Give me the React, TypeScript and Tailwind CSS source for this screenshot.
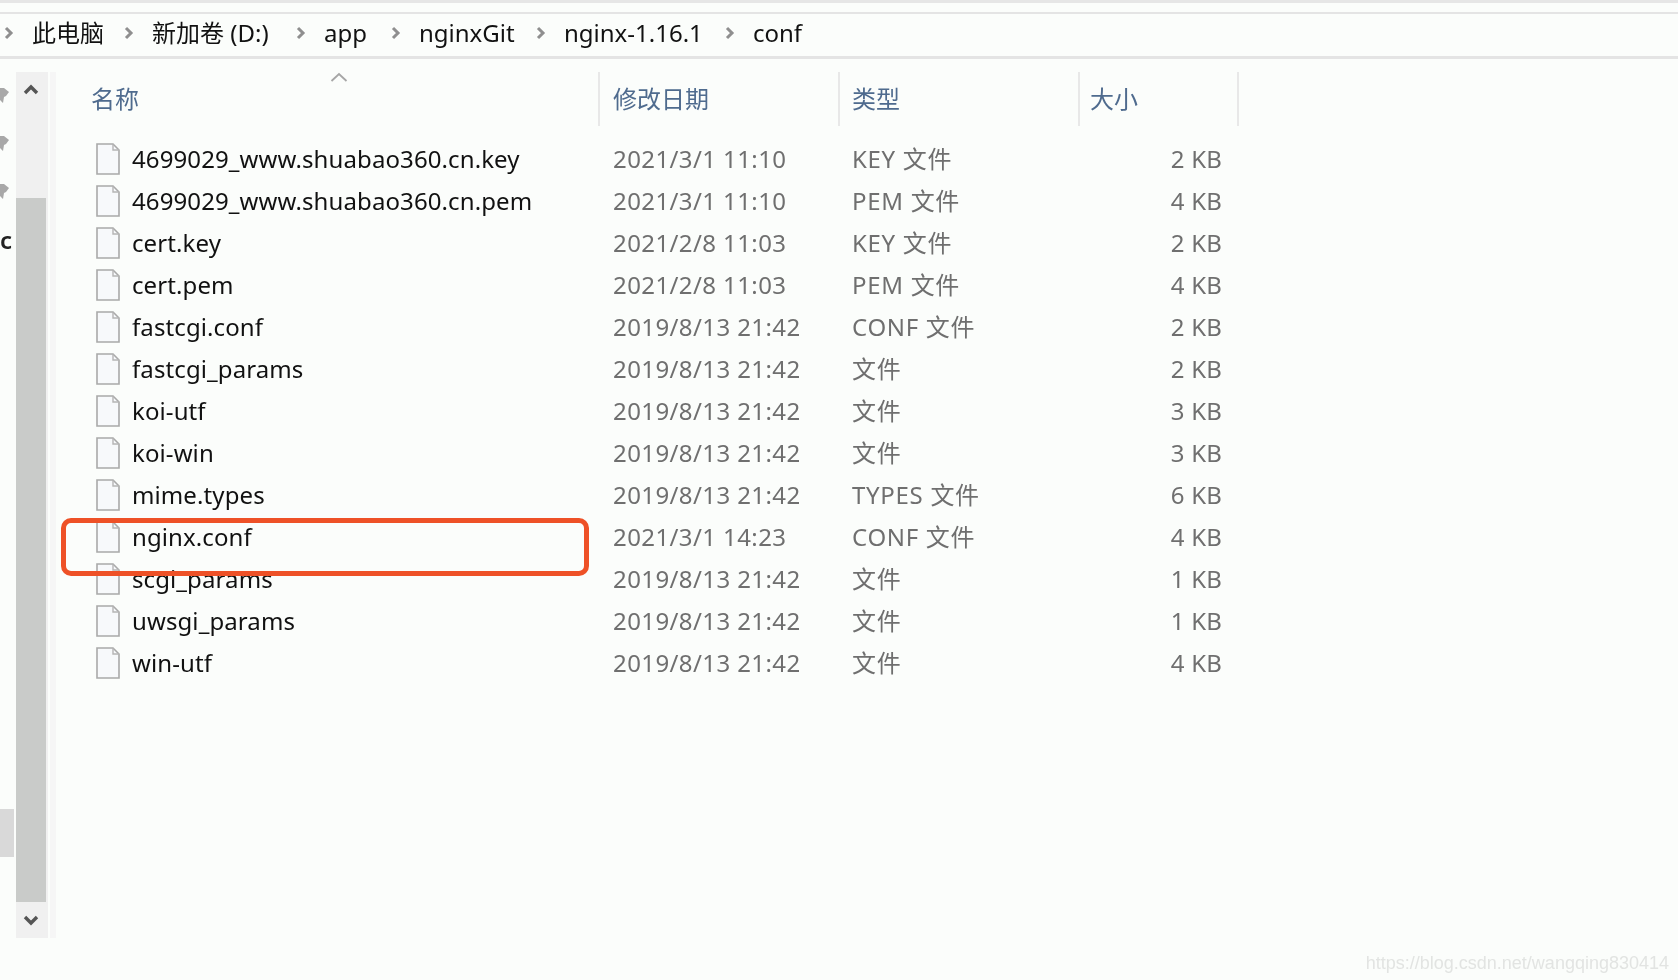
import React from "react";

const files = [
  ["4699029_www.shuabao360.cn.key", "2021/3/1 11:10", "KEY 文件", "2 KB"],
  ["4699029_www.shuabao360.cn.pem", "2021/3/1 11:10", "PEM 文件", "4 KB"],
  ["cert.key", "2021/2/8 11:03", "KEY 文件", "2 KB"],
  ["cert.pem", "2021/2/8 11:03", "PEM 文件", "4 KB"],
  ["fastcgi.conf", "2019/8/13 21:42", "CONF 文件", "2 KB"],
  ["fastcgi_params", "2019/8/13 21:42", "文件", "2 KB"],
  ["koi-utf", "2019/8/13 21:42", "文件", "3 KB"],
  ["koi-win", "2019/8/13 21:42", "文件", "3 KB"],
  ["mime.types", "2019/8/13 21:42", "TYPES 文件", "6 KB"],
  ["nginx.conf", "2021/3/1 14:23", "CONF 文件", "4 KB"],
  ["scgi_params", "2019/8/13 21:42", "文件", "1 KB"],
  ["uwsgi_params", "2019/8/13 21:42", "文件", "1 KB"],
  ["win-utf", "2019/8/13 21:42", "文件", "4 KB"],
];

const crumbs = [
  { label: "此电脑", width: "w-[71px]" },
  { label: "新加卷 (D:)", width: "w-[123px]" },
  { label: "app", width: "w-[46px]" },
  { label: "nginxGit", width: "w-[96px]" },
  { label: "nginx-1.16.1", width: "w-[140px]" },
  { label: "conf", width: "w-[48px]" },
];

const Chevron = () => (
  <svg width="10" height="14" viewBox="0 0 10 14" fill="none" className="shrink-0">
    <path d="M2 2l5 5-5 5" stroke="#8f8f8f" strokeWidth="3" />
  </svg>
);

const FileIcon = () => (
  <svg width="24" height="32" viewBox="0 0 24 32" fill="none" className="shrink-0">
    <path d="M1 1h16l6 6v24H1z" fill="#f7f9fb" stroke="#a9a9a9" strokeWidth="1.6" />
    <path d="M17 1v6h6" stroke="#b5b5b5" strokeWidth="1.4" />
  </svg>
);

const Pin = () => (
  <svg width="9" height="16" viewBox="0 0 9 16" fill="#a8a8a8">
    <path d="M0 1h4l5 4-3 4-2 1-1 6-3-3z" />
  </svg>
);

export default function App() {
  return (
    <div className="relative h-[980px] w-[1678px] overflow-hidden bg-[#fbfdfb] font-['Noto_Sans','Noto_Sans_CJK_SC',sans-serif] text-[24px] leading-none">
      {/* Window top edge */}
      <div className="h-[3px] bg-[#e6e6e6]" />
      <div className="mt-[9px] h-[2px] bg-[#e4e4e4]" />

      {/* Breadcrumb bar */}
      <div className="flex h-[42px] items-center pb-[4px] pl-[4px] text-[#111] blur-[0.4px]">
        <Chevron />
        {crumbs.map((crumb, i) => (
          <div key={crumb.label} className="flex items-center">
            <span className={`${crumb.width} ml-[18px] whitespace-nowrap`}>{crumb.label}</span>
            {i < crumbs.length - 1 && (
              <span className="ml-[21px]">
                <Chevron />
              </span>
            )}
          </div>
        ))}
      </div>
      <div className="h-[3px] bg-[#e4e4e4]" />

      <div className="flex pt-[13px]">
        {/* Nav pane edge */}
        <div className="flex h-[866px] w-[16px] shrink-0 flex-col">
          <div className="mt-[15px] flex flex-col gap-[32px] blur-[0.4px]">
            <Pin />
            <Pin />
            <Pin />
          </div>
          <span className="mt-[29px] font-semibold text-[#222] blur-[0.4px]">c</span>
          <div className="mt-[557px] h-[48px] w-[14px] bg-[#d9d9d9]" />
        </div>

        {/* Scrollbar */}
        <div className="flex h-[866px] w-[32px] shrink-0 flex-col bg-[#f0f0f0]">
          <div className="flex h-[126px] w-[30px] items-start justify-center pt-[12px]">
            <svg width="16" height="12" viewBox="0 0 16 12" fill="none">
              <path d="M2 9l6-6 6 6" stroke="#555" strokeWidth="3.4" />
            </svg>
          </div>
          <div className="h-[704px] w-[30px] bg-[#c9cbc9]" />
          <div className="flex w-[30px] flex-1 items-center justify-center">
            <svg width="16" height="12" viewBox="0 0 16 12" fill="none">
              <path d="M2 3l6 6 6-6" stroke="#555" strokeWidth="3.4" />
            </svg>
          </div>
        </div>
        <div className="ml-[2px] h-[866px] w-[6px] shrink-0 bg-[#f6f6f6]" />

        {/* File list */}
        <div className="relative w-[1186px] blur-[0.4px]">
          <div className="flex h-[54px] text-[#4f6b8e]">
            <div className="relative flex w-[542px] items-center pl-[35px]">
              名称
              <svg width="18" height="10" viewBox="0 0 18 10" fill="none" className="absolute left-[274px] top-0">
                <path d="M1.5 9L9 2l7.5 7" stroke="#a6a6a6" strokeWidth="1.8" />
              </svg>
            </div>
            <div className="flex w-[240px] items-center border-l-2 border-[#e8e8e8] pl-[13px]">修改日期</div>
            <div className="flex w-[240px] items-center border-l-2 border-[#e8e8e8] pl-[12px]">类型</div>
            <div className="flex w-[161px] items-center border-x-2 border-[#e8e8e8] pl-[10px]">大小</div>
          </div>

          <div className="pt-[12px]">
            {files.map(([name, date, type, size]) => (
              <div key={name} className="flex h-[42px] items-center">
                <div className="ml-[40px] flex w-[504px] items-center gap-[12px] tracking-[0.1px] text-[#111]">
                  <FileIcon />
                  <span className="whitespace-nowrap">{name}</span>
                </div>
                <div className="w-[239px] pl-[13px] tracking-[0.4px] whitespace-nowrap text-[#6f6f6f]">{date}</div>
                <div className="w-[200px] pl-[13px] tracking-[0.7px] whitespace-nowrap text-[#6f6f6f]">{type}</div>
                <div className="w-[183px] text-right tracking-[0.2px] whitespace-nowrap text-[#6f6f6f]">{size}</div>
              </div>
            ))}
          </div>

          {/* Red highlight round nginx.conf */}
          <div className="absolute left-[5px] top-[446px] h-[58px] w-[528px] rounded-[10px] border-[5px] border-[#ee5127]" />
        </div>
      </div>

      {/* Watermark */}
      <div className="absolute bottom-[8px] right-[9px] font-['Liberation_Sans',sans-serif] text-[18px] text-[#e2e4e2] blur-[0.4px]">
        https://blog.csdn.net/wangqing830414
      </div>
    </div>
  );
}
